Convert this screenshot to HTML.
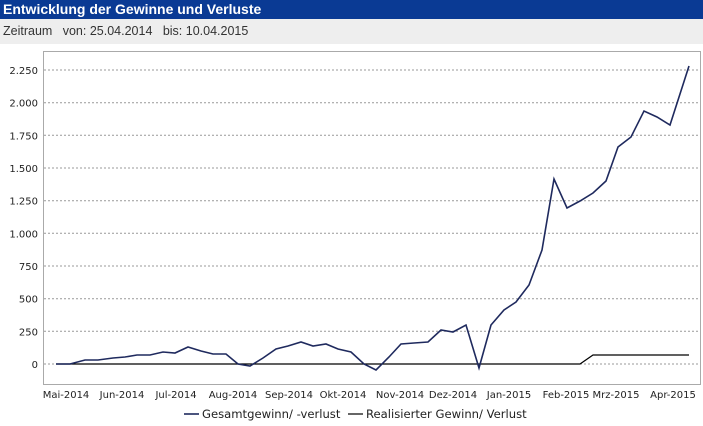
<!DOCTYPE html>
<html><head><meta charset="utf-8"><style>
body{margin:0;width:703px;height:426px;background:#fff;font-family:"Liberation Sans",sans-serif;overflow:hidden;position:relative}
.h{position:absolute;left:0;top:0;width:703px;height:19px;background:#0a3a94;color:#fff;font-weight:bold;font-size:14px;line-height:19px;padding-left:3px;box-sizing:border-box}
.s{position:absolute;left:0;top:19px;width:703px;height:25px;background:#eeeeee;color:#333;font-size:12.5px;line-height:25px;padding-left:3px;box-sizing:border-box}
svg{position:absolute;left:0;top:0}
</style></head><body>
<div class="h">Entwicklung der Gewinne und Verluste</div>
<div class="s">Zeitraum&nbsp;&nbsp;&nbsp;von: 25.04.2014&nbsp;&nbsp;&nbsp;bis: 10.04.2015</div>
<svg width="703" height="426" font-family="DejaVu Sans, sans-serif" font-size="10" fill="#222">
<rect x="43.5" y="51.5" width="657" height="333" fill="none" stroke="#aaa"/>
<g stroke="#999" stroke-dasharray="2,2">
<line x1="44" x2="700" y1="70" y2="70"/><line x1="44" x2="700" y1="102.7" y2="102.7"/><line x1="44" x2="700" y1="135.3" y2="135.3"/><line x1="44" x2="700" y1="168" y2="168"/><line x1="44" x2="700" y1="200.7" y2="200.7"/><line x1="44" x2="700" y1="233.3" y2="233.3"/><line x1="44" x2="700" y1="266" y2="266"/><line x1="44" x2="700" y1="298.7" y2="298.7"/><line x1="44" x2="700" y1="331.3" y2="331.3"/><line x1="44" x2="700" y1="364" y2="364"/>
</g>
<g text-anchor="end">
<text x="38" y="74">2.250</text><text x="38" y="106.7">2.000</text><text x="38" y="139.3">1.750</text><text x="38" y="172">1.500</text><text x="38" y="204.7">1.250</text><text x="38" y="237.3">1.000</text><text x="38" y="270">750</text><text x="38" y="302.7">500</text><text x="38" y="335.3">250</text><text x="38" y="368">0</text>
</g>
<g text-anchor="middle">
<text x="66" y="398">Mai-2014</text><text x="122" y="398">Jun-2014</text><text x="176" y="398">Jul-2014</text><text x="233" y="398">Aug-2014</text><text x="289" y="398">Sep-2014</text><text x="343" y="398">Okt-2014</text><text x="400" y="398">Nov-2014</text><text x="453" y="398">Dez-2014</text><text x="509" y="398">Jan-2015</text><text x="566" y="398">Feb-2015</text><text x="616" y="398">Mrz-2015</text><text x="673" y="398">Apr-2015</text>
</g>
<polyline fill="none" stroke="#000" stroke-width="1.2" points="56,364 580,364 593,355 689,355"/>
<polyline fill="none" stroke="#1f2a5e" stroke-width="1.6" points="56,364 70,364 85,360 98,360 113,358 125,357 137,355 150,355 163,352 175,353 188,347 201,351 213,354 226,354 238,364 250,366 263,358 276,349 288,346 301,342 313,346 326,344 338,349 351,352 364,364 376,370 389,357 401,344 414,343 428,342 441,330 453,332 466,325 479,368 491,325 504,310 516,302 529,285 542,250 554,179 567,208 580,201 593,193 606,181 618,147 631,137 644,111 657,117 670,125 689,66"/>
<line x1="184" x2="199" y1="414" y2="414" stroke="#1f2a5e" stroke-width="1.6"/>
<text x="202" y="418" font-size="11.6">Gesamtgewinn/ -verlust</text>
<line x1="348" x2="363" y1="414" y2="414" stroke="#000" stroke-width="1.2"/>
<text x="366" y="418" font-size="11.6">Realisierter Gewinn/ Verlust</text>
</svg>
</body></html>
